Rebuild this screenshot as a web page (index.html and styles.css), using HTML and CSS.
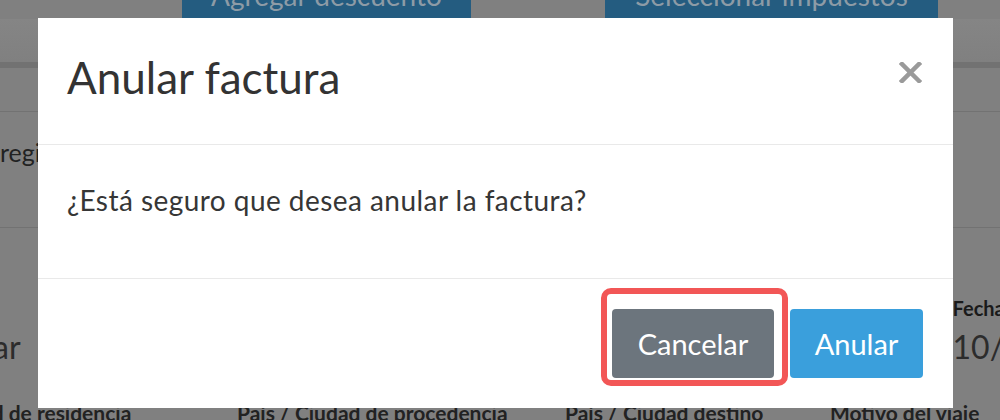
FILE: index.html
```html
<!DOCTYPE html>
<html lang="es">
<head>
  <meta charset="UTF-8">
  <meta name="viewport" content="width=device-width, initial-scale=1.0">
  <title>Anular factura</title>
  <link rel="stylesheet" href="styles.css">
</head>
<body>

  <!-- pagina de fondo (atenuada por el modal) -->
  <div class="pagina">
    <div class="barra">
      <span class="boton-fondo descuento"><span>Agregar descuento</span></span>
      <span class="boton-fondo impuestos"><span>Seleccionar impuestos</span></span>
    </div>
    <div class="franja"></div>
    <div class="fila fila-corta"></div>
    <div class="fila fila-registro"><span>registro</span></div>
    <div class="fila fila-datos">
      <span class="dato-izq">ar</span>
      <div class="dato-fecha">
        <b>Fecha</b>
        <span>10/10/2019</span>
      </div>
    </div>
    <div class="fila fila-titulos">
      <span class="primera">Ciudad de residencia</span>
      <span>País / Ciudad de procedencia</span>
      <span>País / Ciudad destino</span>
      <span>Motivo del viaje</span>
    </div>
  </div>

  <div class="modal">
    <div class="modal-header">
      <h5 class="modal-title">Anular factura</h5>
      <button class="cerrar" aria-label="Cerrar">
        <svg width="23" height="21" viewBox="0 0 23 21">
          <path d="M3 2 L20 19 M20 2 L3 19" stroke="#9a9a9a" stroke-width="4.5" stroke-linecap="square" fill="none"/>
        </svg>
      </button>
    </div>
    <div class="modal-body">
      <p>¿Está seguro que desea anular la factura?</p>
    </div>
    <div class="modal-footer">
      <span class="resaltado">
        <button class="btn btn-gris">Cancelar</button>
      </span>
      <button class="btn btn-azul">Anular</button>
    </div>
  </div>

</body>
</html>
```

FILE: styles.css
```css
:root {
  --fondo: #808080;
  --texto-fondo: #222222;
  --gris: #6c757d;
  --azul: #3a9fdc;
  --rojo: #f25656;
}
body {
  margin: 0;
  font-family: Lato, "Open Sans", sans-serif;
  background-color: var(--fondo);
  overflow: hidden;
  width: 1000px;
  height: 420px;
  position: relative;
}
.pagina {
  color: var(--texto-fondo);
}
.barra {
  display: flex;
  height: 19px;
}
.boton-fondo {
  display: block;
  height: 19px;
  overflow: hidden;
  background-color: #245c80;
  color: #8d9ba6;
  font-size: 28px;
  text-align: center;
}
.boton-fondo span {
  display: block;
  line-height: 16px;
  margin-top: -13px;
}
.descuento {
  margin-left: 182px;
  width: 289px;
}
.impuestos {
  margin-left: 134px;
  width: 333px;
}
.franja {
  height: 43px;
  background: linear-gradient(#858585, #808080);
  border-bottom: 6px solid #727272;
}
.fila {
  border-bottom: 1px solid #727272;
}
.fila-corta {
  height: 43px;
}
.fila-registro {
  height: 115px;
  font-size: 25px;
}
.fila-registro span {
  display: block;
  padding-top: 25px;
}
.fila-datos {
  height: 172px;
  border-bottom: none;
  display: flex;
  font-size: 32px;
  color: #2c2c2c;
}
.dato-izq {
  margin-left: -7px;
  padding-top: 99px;
}
.dato-fecha {
  margin-left: 932px;
  padding-top: 68px;
  white-space: nowrap;
  display: flex;
  flex-direction: column;
}
.dato-fecha b {
  font-size: 20px;
  color: #1a1a1a;
}
.dato-fecha span {
  margin-top: 7px;
}
.fila-titulos {
  display: grid;
  grid-template-columns: 237px 328px 265px 1fr;
  font-size: 21px;
  font-weight: bold;
  white-space: nowrap;
  border-bottom: none;
}
.fila-titulos .primera {
  margin-left: -62px;
}

/* modal */
.modal {
  position: absolute;
  top: 18px;
  left: 38px;
  width: 915px;
  height: 390px;
  background-color: #ffffff;
  display: flex;
  flex-direction: column;
  color: #333333;
}
.modal-header {
  height: 126px;
  border-bottom: 1px solid #e9e9e9;
  display: flex;
  align-items: center;
  justify-content: space-between;
  padding: 0 31px 0 29px;
  box-sizing: content-box;
}
.modal-title {
  margin: 0 0 8px;
  font-size: 44px;
  font-weight: normal;
  color: #333333;
}
.cerrar {
  background: none;
  border: none;
  padding: 0;
  margin-bottom: 18px;
  cursor: pointer;
  display: flex;
}
.modal-body {
  height: 133px;
  border-bottom: 1px solid #e9e9e9;
  padding: 0 29px;
  display: flex;
  align-items: center;
}
.modal-body p {
  margin: 0 0 24px;
  font-size: 28px;
  letter-spacing: 0.45px;
  color: #363636;
}
.modal-footer {
  flex: 1;
  display: flex;
  justify-content: flex-end;
  align-items: flex-start;
  gap: 16px;
  padding: 30px 30px 0;
}
.btn {
  height: 69px;
  border: none;
  border-radius: 4px;
  color: #ffffff;
  font-family: Lato, "Open Sans", sans-serif;
  font-size: 29px;
  cursor: pointer;
}
.btn-gris {
  width: 162px;
  background-color: var(--gris);
}
.btn-azul {
  width: 133px;
  background-color: var(--azul);
}
.resaltado {
  position: relative;
  display: flex;
}
.resaltado::after {
  content: "";
  position: absolute;
  top: -21px;
  left: -11px;
  right: -14px;
  bottom: -8px;
  border: 6px solid var(--rojo);
  border-radius: 10px;
}
```
